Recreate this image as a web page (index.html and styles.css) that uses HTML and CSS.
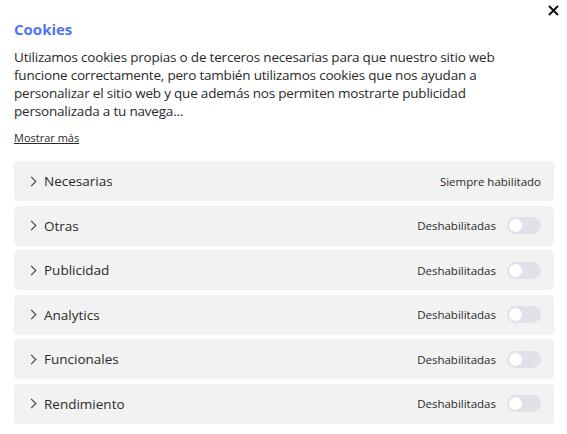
FILE: index.html
```html
<!DOCTYPE html>
<html lang="es">
  <head>
    <meta charset="utf-8" />
    <meta name="viewport" content="width=device-width, initial-scale=1.0" />
    <title>Cookies</title>
    <link rel="stylesheet" href="styles.css">
  </head>

  <body>
    <section class="panel">
      <button class="cerrar" aria-label="Cerrar">
        <svg width="11" height="11" viewBox="0 0 11 11">
          <path d="M1 1 L10 10 M10 1 L1 10" stroke="#111" stroke-width="2" />
        </svg>
      </button>

      <h1 class="titel">Cookies</h1>
      <p class="tekst">
        Utilizamos cookies propias o de terceros necesarias para que nuestro sitio web
        funcione correctamente, pero también utilizamos cookies que nos ayudan a
        personalizar el sitio web y que además nos permiten mostrarte publicidad
        personalizada a tu navega...
      </p>
      <a href="#" class="mere">Mostrar más</a>

      <div class="liste">
        <div class="raekke">
          <span class="pil"></span>
          <span class="navn">Necesarias</span>
          <span class="status">Siempre habilitado</span>
        </div>
        <div class="raekke">
          <span class="pil"></span>
          <span class="navn">Otras</span>
          <span class="status">Deshabilitadas</span>
          <span class="knap"></span>
        </div>
        <div class="raekke">
          <span class="pil"></span>
          <span class="navn">Publicidad</span>
          <span class="status">Deshabilitadas</span>
          <span class="knap"></span>
        </div>
        <div class="raekke">
          <span class="pil"></span>
          <span class="navn">Analytics</span>
          <span class="status">Deshabilitadas</span>
          <span class="knap"></span>
        </div>
        <div class="raekke">
          <span class="pil"></span>
          <span class="navn">Funcionales</span>
          <span class="status">Deshabilitadas</span>
          <span class="knap"></span>
        </div>
        <div class="raekke">
          <span class="pil"></span>
          <span class="navn">Rendimiento</span>
          <span class="status">Deshabilitadas</span>
          <span class="knap"></span>
        </div>
      </div>
    </section>
  </body>
</html>
```

FILE: styles.css
```css
body {
  margin: 0;
  font-family: "Open Sans", "Liberation Sans", sans-serif;
  color: #2a2a2a;
  background: #fff;
}

.panel {
  position: relative;
  padding: 18px 13px 0 14px;
}

.cerrar {
  position: absolute;
  top: 5px;
  right: 8px;
  border: 0;
  background: none;
  padding: 0;
  width: 11px;
  height: 11px;
  cursor: pointer;
}

.cerrar svg {
  display: block;
}

.titel {
  margin: 0;
  font-size: 15px;
  line-height: 22px;
  font-weight: 700;
  color: #4f74f9;
}

.tekst {
  margin: 8px 0 0;
  max-width: 510px;
  font-size: 13.5px;
  letter-spacing: -0.2px;
  line-height: 18px;
}

.mere {
  display: inline-block;
  margin-top: 10px;
  font-size: 11px;
  color: #2a2a2a;
}

.liste {
  display: flex;
  flex-direction: column;
  gap: 4.6px;
  margin-top: 14px;
}

.raekke {
  display: flex;
  align-items: center;
  height: 40px;
  padding: 0 13px 0 14px;
  background: #f2f2f2;
  border-radius: 4px;
}

.pil {
  width: 6px;
  height: 6px;
  border-top: 1px solid #333;
  border-right: 1px solid #333;
  transform: rotate(45deg);
  margin-right: 9px;
}

.navn {
  flex: 1;
  font-size: 13.5px;
}

.status {
  font-size: 11.5px;
}

.knap {
  position: relative;
  width: 34px;
  height: 17px;
  margin-left: 11px;
  border-radius: 9px;
  background: #e1e1e9;
}

.knap::after {
  content: "";
  position: absolute;
  left: 2px;
  top: 2px;
  width: 13px;
  height: 13px;
  border-radius: 50%;
  background: #fff;
}
```
